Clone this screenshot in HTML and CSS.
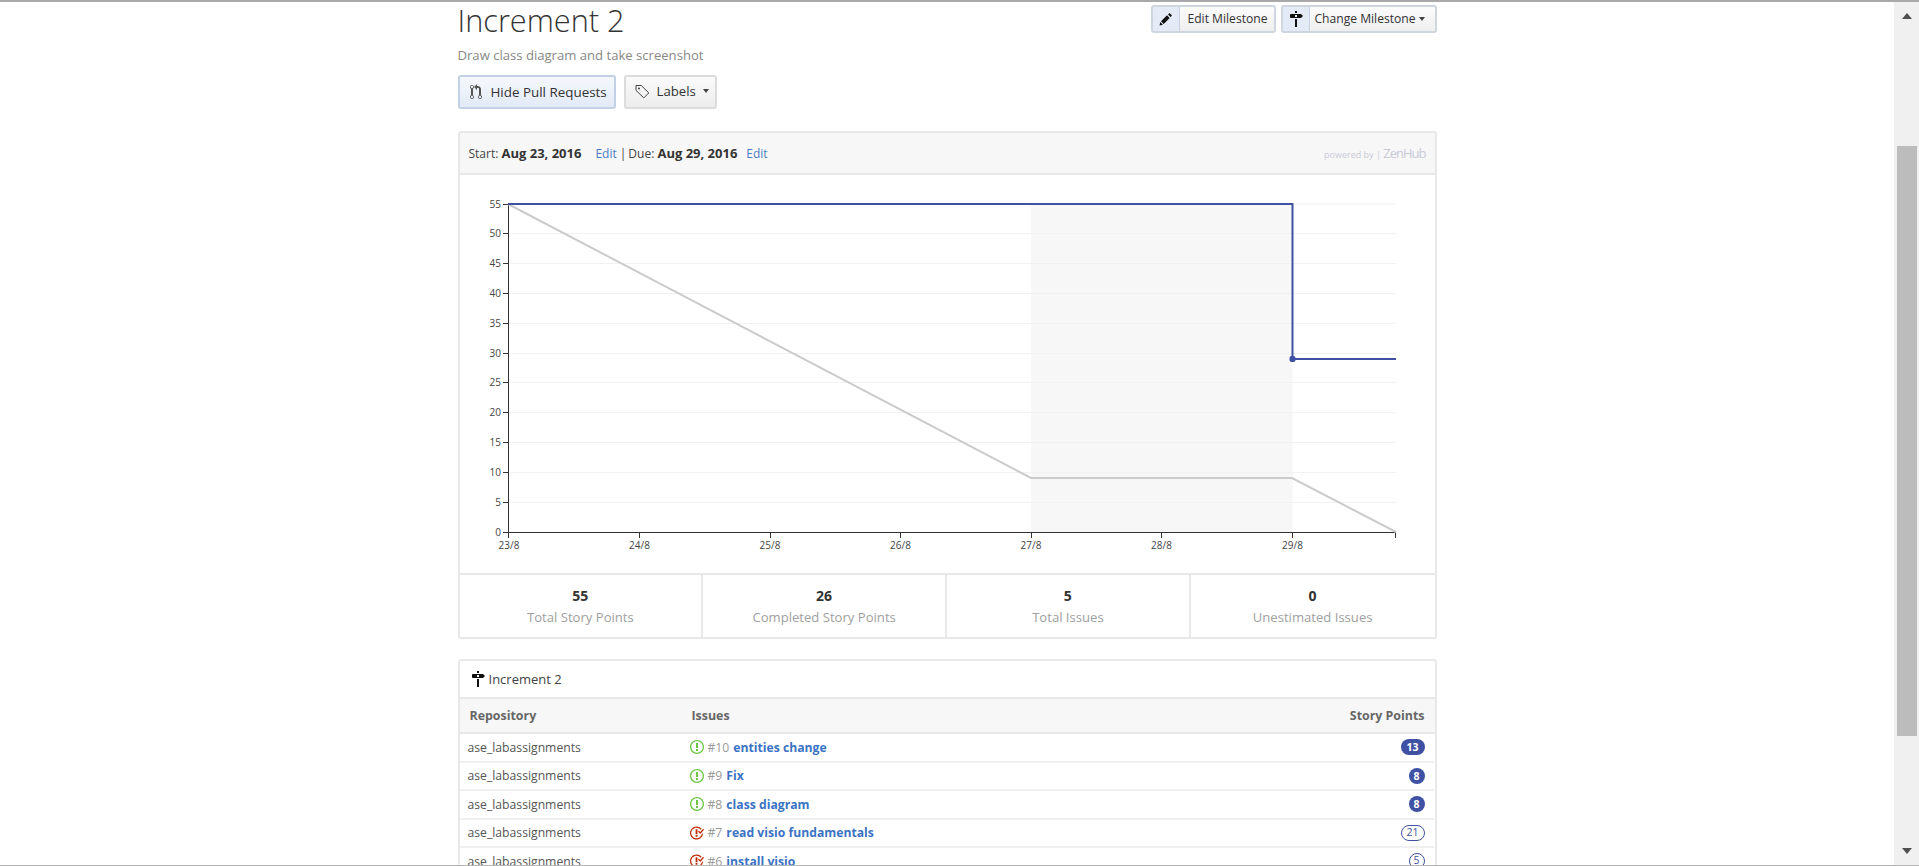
FILE: index.html
```html
<!DOCTYPE html>
<html lang="en">
<head>
  <meta charset="UTF-8" />
  <title>Increment 2</title>
  <link rel="stylesheet" href="styles.css">
</head>
<body>

<div class="window">
  <div class="content">
    <main class="milestone">

      <div class="top">
        <div class="heading">
          <h1>Increment 2</h1>
          <p class="desc">Draw class diagram and take screenshot</p>
          <div class="filters">
            <button class="btn btn-active">
              <svg class="icon" width="12" height="16" viewBox="0 0 12 16"><path d="M11 11.28V5c-.03-.78-.34-1.47-.94-2.06C9.46 2.35 8.78 2.03 8 2H7V0L4 3l3 3V4h1c.27.02.48.11.69.31.21.2.3.42.31.69v6.28A1.993 1.993 0 0 0 10 15a1.993 1.993 0 0 0 1-3.72zm-1 2.92c-.66 0-1.2-.55-1.2-1.2 0-.65.55-1.2 1.2-1.2.65 0 1.2.55 1.2 1.2 0 .65-.55 1.2-1.2 1.2zM4 3c0-1.11-.89-2-2-2a1.993 1.993 0 0 0-1 3.72v6.56A1.993 1.993 0 0 0 2 15a1.993 1.993 0 0 0 1-3.72V4.72c.59-.34 1-.98 1-1.72zm-.8 10c0 .66-.55 1.2-1.2 1.2-.65 0-1.2-.55-1.2-1.2 0-.65.55-1.2 1.2-1.2.65 0 1.2.55 1.2 1.2zM2 4.2C1.34 4.2.8 3.65.8 3c0-.65.55-1.2 1.2-1.2.65 0 1.2.55 1.2 1.2 0 .65-.55 1.2-1.2 1.2z"/></svg>
              Hide Pull Requests
            </button>
            <button class="btn btn-labels">
              <svg class="icon" width="15" height="15" viewBox="0 0 15 15"><path d="M1 1.5h5.2l7.6 7.4-5 5L1 6.4z" fill="none" stroke="#444" stroke-width="1"/><circle cx="4" cy="4.5" r="1" fill="#444"/></svg>
              Labels <span class="caret"></span>
            </button>
          </div>
        </div>
        <div class="actions">
          <button class="split split-edit">
            <span class="split-icon">
              <svg width="13" height="13" viewBox="0 0 13 13"><path d="M0.5 12.5l.8-3.4 2.6 2.6zM2 8.3l6-6 2.7 2.7-6 6zM9 1.4l1-1c.3-.3.7-.3 1 0l1.6 1.6c.3.3.3.7 0 1l-1 1z" fill="#111"/></svg>
            </span>
            <span class="split-text">Edit Milestone</span>
          </button>
          <button class="split split-change">
            <span class="split-icon">
              <svg width="14" height="16" viewBox="0 0 14 16"><path d="M8 2H6V0h2v2zm4 5H2c-.55 0-1-.45-1-1V4c0-.55.45-1 1-1h10l2 2-2 2zM8 4H6v2h2V4zM6 16h2V8H6v8z" fill="#111"/></svg>
            </span>
            <span class="split-text">Change Milestone <span class="caret caret-small"></span></span>
          </button>
        </div>
      </div>

      <section class="panel chart-panel">
        <div class="panel-head">
          <span>Start: <b>Aug 23, 2016</b></span>
          <a class="edit edit-first" href="#">Edit</a>
          <span class="pipe">|</span>
          <span>Due: <b>Aug 29, 2016</b></span>
          <a class="edit edit-second" href="#">Edit</a>
          <span class="powered">powered by | <span class="zenhub">ZenHub</span></span>
        </div>

        <svg class="chart" width="975" height="398" viewBox="460 175 975 398">
          <rect x="1031" y="204" width="261.5" height="328" fill="#f7f7f7"/>

          <g class="grid">
            <line x1="508" x2="1396" y1="204" y2="204"/>
            <line x1="508" x2="1396" y1="233.5" y2="233.5"/>
            <line x1="508" x2="1396" y1="263.5" y2="263.5"/>
            <line x1="508" x2="1396" y1="293.5" y2="293.5"/>
            <line x1="508" x2="1396" y1="323.5" y2="323.5"/>
            <line x1="508" x2="1396" y1="353.5" y2="353.5"/>
            <line x1="508" x2="1396" y1="382.5" y2="382.5"/>
            <line x1="508" x2="1396" y1="412.5" y2="412.5"/>
            <line x1="508" x2="1396" y1="442.5" y2="442.5"/>
            <line x1="508" x2="1396" y1="472.5" y2="472.5"/>
            <line x1="508" x2="1396" y1="502.5" y2="502.5"/>
          </g>

          <g class="ticks">
            <path d="M503 204.5h5M503 233.5h5M503 263.5h5M503 293.5h5M503 323.5h5M503 353.5h5M503 382.5h5M503 412.5h5M503 442.5h5M503 472.5h5M503 502.5h5M503 532.5h5"/>
            <path d="M508.5 532v6M639.5 532v6M770.5 532v6M900.5 532v6M1031.5 532v6M1161.5 532v6M1292.5 532v6M1395.5 532v6"/>
            <path d="M508.5 204v328.5H1396"/>
          </g>

          <g class="y-labels">
            <text x="501" y="207.5">55</text>
            <text x="501" y="237">50</text>
            <text x="501" y="267">45</text>
            <text x="501" y="297">40</text>
            <text x="501" y="327">35</text>
            <text x="501" y="357">30</text>
            <text x="501" y="386">25</text>
            <text x="501" y="416">20</text>
            <text x="501" y="446">15</text>
            <text x="501" y="476">10</text>
            <text x="501" y="506">5</text>
            <text x="501" y="536">0</text>
          </g>
          <g class="x-labels">
            <text x="509" y="549">23/8</text>
            <text x="639.5" y="549">24/8</text>
            <text x="770" y="549">25/8</text>
            <text x="900.5" y="549">26/8</text>
            <text x="1031" y="549">27/8</text>
            <text x="1161.5" y="549">28/8</text>
            <text x="1292.5" y="549">29/8</text>
          </g>

          <polyline class="ideal" points="508,204 1031,478 1292,478 1396,532"/>
          <polyline class="actual" points="508,204 1292.5,204 1292.5,359 1396,359"/>
          <rect x="1289.5" y="356" width="6" height="6" rx="2" fill="#3f51a3"/>
        </svg>

        <div class="stats">
          <div class="stat"><strong>55</strong><span>Total Story Points</span></div>
          <div class="stat"><strong>26</strong><span>Completed Story Points</span></div>
          <div class="stat"><strong>5</strong><span>Total Issues</span></div>
          <div class="stat"><strong>0</strong><span>Unestimated Issues</span></div>
        </div>
      </section>

      <section class="panel issues-panel">
        <div class="issues-title">
          <svg width="14" height="16" viewBox="0 0 14 16"><path d="M8 2H6V0h2v2zm4 5H2c-.55 0-1-.45-1-1V4c0-.55.45-1 1-1h10l2 2-2 2zM8 4H6v2h2V4zM6 16h2V8H6v8z" fill="#111"/></svg>
          Increment 2
        </div>
        <div class="row row-head">
          <span class="col-repo">Repository</span>
          <span class="col-issue">Issues</span>
          <span class="col-points">Story Points</span>
        </div>

        <div class="row">
          <span class="col-repo">ase_labassignments</span>
          <span class="col-issue">
            <svg class="issue-open" width="14" height="16" viewBox="0 0 14 16"><path d="M7 2.3c3.14 0 5.7 2.56 5.7 5.7s-2.56 5.7-5.7 5.7A5.71 5.71 0 0 1 1.3 8c0-3.14 2.56-5.7 5.7-5.7zM7 1C3.14 1 0 4.14 0 8s3.14 7 7 7 7-3.14 7-7-3.14-7-7-7zm1 3H6v5h2V4zm0 6H6v2h2v-2z"/></svg>
            <span class="num">#10</span> <a href="#">entities change</a>
          </span>
          <span class="col-points"><span class="badge badge-wide">13</span></span>
        </div>
        <div class="row">
          <span class="col-repo">ase_labassignments</span>
          <span class="col-issue">
            <svg class="issue-open" width="14" height="16" viewBox="0 0 14 16"><path d="M7 2.3c3.14 0 5.7 2.56 5.7 5.7s-2.56 5.7-5.7 5.7A5.71 5.71 0 0 1 1.3 8c0-3.14 2.56-5.7 5.7-5.7zM7 1C3.14 1 0 4.14 0 8s3.14 7 7 7 7-3.14 7-7-3.14-7-7-7zm1 3H6v5h2V4zm0 6H6v2h2v-2z"/></svg>
            <span class="num">#9</span> <a href="#">Fix</a>
          </span>
          <span class="col-points"><span class="badge">8</span></span>
        </div>
        <div class="row">
          <span class="col-repo">ase_labassignments</span>
          <span class="col-issue">
            <svg class="issue-open" width="14" height="16" viewBox="0 0 14 16"><path d="M7 2.3c3.14 0 5.7 2.56 5.7 5.7s-2.56 5.7-5.7 5.7A5.71 5.71 0 0 1 1.3 8c0-3.14 2.56-5.7 5.7-5.7zM7 1C3.14 1 0 4.14 0 8s3.14 7 7 7 7-3.14 7-7-3.14-7-7-7zm1 3H6v5h2V4zm0 6H6v2h2v-2z"/></svg>
            <span class="num">#8</span> <a href="#">class diagram</a>
          </span>
          <span class="col-points"><span class="badge">8</span></span>
        </div>
        <div class="row">
          <span class="col-repo">ase_labassignments</span>
          <span class="col-issue">
            <svg class="issue-closed" width="14" height="16" viewBox="1 0 15 16"><path d="M7 10h2v2H7v-2zm2-6H7v5h2V4zm1.5 1.5l-1 1L12 9l4-4.5-1-1L12 7l-1.5-1.5zM8 13.7A5.71 5.71 0 0 1 2.3 8c0-3.14 2.56-5.7 5.7-5.7 1.83 0 3.45.88 4.5 2.2l.92-.92A6.947 6.947 0 0 0 8 1C4.14 1 1 4.14 1 8s3.14 7 7 7 7-3.14 7-7l-1.52 1.52c-.66 2.41-2.86 4.19-5.48 4.19v-.01z"/></svg>
            <span class="num">#7</span> <a href="#">read visio fundamentals</a>
          </span>
          <span class="col-points"><span class="badge badge-outline badge-wide">21</span></span>
        </div>
        <div class="row">
          <span class="col-repo">ase_labassignments</span>
          <span class="col-issue">
            <svg class="issue-closed" width="14" height="16" viewBox="1 0 15 16"><path d="M7 10h2v2H7v-2zm2-6H7v5h2V4zm1.5 1.5l-1 1L12 9l4-4.5-1-1L12 7l-1.5-1.5zM8 13.7A5.71 5.71 0 0 1 2.3 8c0-3.14 2.56-5.7 5.7-5.7 1.83 0 3.45.88 4.5 2.2l.92-.92A6.947 6.947 0 0 0 8 1C4.14 1 1 4.14 1 8s3.14 7 7 7 7-3.14 7-7l-1.52 1.52c-.66 2.41-2.86 4.19-5.48 4.19v-.01z"/></svg>
            <span class="num">#6</span> <a href="#">install visio</a>
          </span>
          <span class="col-points"><span class="badge badge-outline">5</span></span>
        </div>
      </section>

    </main>
  </div>

  <div class="scrollbar">
    <span class="arrow arrow-up"></span>
    <div class="thumb"></div>
    <span class="arrow arrow-down"></span>
  </div>
</div>

</body>
</html>
```

FILE: styles.css
```css
html, body {
  margin: 0;
  padding: 0;
  height: 100%;
  overflow: hidden;
}

body {
  font-family: "Open Sans", "Noto Sans", sans-serif;
  font-size: 12px;
  color: #333;
  background: #fff;
}

.window {
  display: flex;
  height: 100vh;
  box-sizing: border-box;
  border-top: 2px solid #a9a9a9;
  border-bottom: 1px solid #b5b5b5;
}

.content {
  flex: 1;
  overflow: hidden;
}

.milestone {
  width: 979px;
  margin: 0 auto;
}

/* top area */
.top {
  display: flex;
  justify-content: space-between;
  align-items: flex-start;
  height: 129px;
}

h1 {
  margin: -1px 0 0;
  font-size: 30.7px;
  font-weight: 300;
  line-height: 38px;
  color: #333;
}

.desc {
  margin: 7px 0 0;
  font-size: 13.1px;
  line-height: 18px;
  color: #888;
}

.filters {
  display: flex;
  gap: 8px;
  margin-top: 11px;
}

button {
  font-family: inherit;
  color: #333;
  padding: 0;
  cursor: pointer;
}

.btn {
  display: flex;
  align-items: center;
  gap: 9px;
  height: 34px;
  box-sizing: border-box;
  border: 2px solid #dcdcdc;
  border-radius: 3px;
  background: linear-gradient(#fbfbfb, #ececec);
  font-size: 13px;
}

.btn-active {
  width: 158px;
  padding-left: 10px;
  border-color: #c3d1e6;
  background: linear-gradient(#f5f8fd, #e3eaf6);
  font-size: 13.4px;
  font-weight: 500;
}

.btn-active .icon path {
  fill: #555;
}

.btn-labels {
  width: 93px;
  padding-left: 9px;
  padding-bottom: 2px;
  gap: 7px;
  font-size: 13.2px;
  font-weight: 500;
}

.caret {
  display: inline-block;
  border-top: 4px solid #444;
  border-left: 3px solid transparent;
  border-right: 3px solid transparent;
  vertical-align: middle;
}

.actions {
  display: flex;
  gap: 5px;
  margin-top: 3px;
}

.split {
  display: flex;
  height: 28px;
  box-sizing: border-box;
  border: 2px solid #cfd6df;
  border-radius: 3px;
  background: linear-gradient(#fcfcfc, #efefef);
  font-size: 12.1px;
}

.split-edit {
  width: 125px;
}

.split-change {
  width: 156px;
}

.split-icon {
  display: flex;
  align-items: center;
  justify-content: center;
  flex-shrink: 0;
  width: 27px;
  height: 100%;
  box-sizing: border-box;
  background: #e4ebf6;
  border-right: 1px solid #c8d3e2;
}

.split-text {
  display: flex;
  align-items: center;
  gap: 3px;
  line-height: 24px;
  white-space: nowrap;
}

.split-edit .split-text {
  padding-left: 8px;
}

.split-change .split-text {
  padding-left: 5px;
}

/* panels */
.panel {
  border: 2px solid #e8e8e8;
  border-radius: 3px;
  box-sizing: border-box;
}

.panel-head {
  display: flex;
  align-items: center;
  height: 40px;
  padding: 0 9px;
  background: #f7f7f7;
  border-bottom: 2px solid #e8e8e8;
  font-size: 12px;
  color: #444;
  white-space: pre;
}

.panel-head b {
  font-size: 13px;
  color: #333;
}

.edit {
  color: #4a7cc4;
  text-decoration: none;
}

.edit-first {
  margin-left: 14px;
}

.pipe {
  margin: 0 2px 0 3px;
}

.edit-second {
  margin-left: 9px;
}

.powered {
  margin-left: auto;
  font-size: 9px;
  color: #c9cad8;
}

.zenhub {
  font-size: 13px;
  letter-spacing: -1px;
}

.chart {
  display: block;
}

.grid line {
  stroke: #f1f1f1;
  stroke-width: 1;
}

.ticks path {
  fill: none;
  stroke: #333;
  stroke-width: 1;
}

.chart text {
  font-family: "Open Sans", sans-serif;
  font-size: 10px;
  fill: #444;
}

.y-labels text {
  text-anchor: end;
}

.x-labels text {
  text-anchor: middle;
}

.ideal {
  fill: none;
  stroke: #cbcbcb;
  stroke-width: 2;
}

.actual {
  fill: none;
  stroke: #3f51a3;
  stroke-width: 2;
}

.stats {
  display: grid;
  grid-template-columns: repeat(4, 1fr);
  border-top: 2px solid #e8e8e8;
}

.stat {
  display: flex;
  flex-direction: column;
  align-items: center;
  height: 62px;
  padding-top: 11px;
  box-sizing: border-box;
  border-right: 2px solid #e8e8e8;
}

.stat:last-child {
  border-right: 0;
}

.stat strong {
  font-size: 14px;
  line-height: 20px;
  color: #333;
}

.stat span {
  font-size: 13.1px;
  line-height: 22px;
  color: #a0a0a0;
}

/* issues table */
.issues-panel {
  margin-top: 20px;
  border-bottom: 0;
  border-radius: 3px 3px 0 0;
}

.issues-title {
  display: flex;
  align-items: center;
  gap: 4px;
  height: 36px;
  padding-left: 11px;
  font-size: 13px;
  color: #444;
}

.row {
  display: flex;
  align-items: center;
  height: 28.5px;
  box-sizing: border-box;
  border-bottom: 2px solid #f0f0f0;
  padding: 0 9px 0 8px;
  font-size: 12.2px;
  color: #555;
  margin-right: 1px;
}

.row-head {
  height: 37px;
  margin-right: 0;
  background: #f7f7f7;
  border-top: 2px solid #e8e8e8;
  border-bottom: 2px solid #e8e8e8;
  font-size: 12.4px;
  font-weight: 700;
  color: #666;
  padding-left: 10px;
  padding-right: 10px;
}

.col-repo {
  width: 222px;
  flex-shrink: 0;
}

.col-issue {
  flex: 1;
  display: flex;
  align-items: center;
  gap: 4px;
  white-space: pre;
}

.col-points {
  text-align: right;
}

.issue-open path {
  fill: #6cc644;
}

.issue-closed path {
  fill: #bd2c00;
}

.num {
  color: #999;
}

.col-issue a {
  color: #3b73c4;
  font-weight: 700;
  text-decoration: none;
}

.badge {
  display: block;
  width: 16px;
  height: 16px;
  box-sizing: border-box;
  border-radius: 8px;
  background: #3f51a3;
  color: #fff;
  font-size: 10.5px;
  font-weight: 700;
  line-height: 16px;
  text-align: center;
}

.badge-wide {
  width: 24px;
}

.badge-outline {
  background: #fff;
  border: 1.5px solid #3f51a3;
  color: #3f51a3;
  font-weight: 500;
  line-height: 13px;
}

/* window scrollbar */
.scrollbar {
  position: relative;
  width: 25px;
  flex-shrink: 0;
  background: #f0f0f0;
}

.thumb {
  position: absolute;
  top: 144px;
  left: 3px;
  width: 20px;
  height: 590px;
  background: #bcbcbc;
}

.arrow {
  position: absolute;
  left: 8px;
  border-left: 5px solid transparent;
  border-right: 5px solid transparent;
}

.arrow-up {
  top: 11px;
  border-bottom: 6px solid #505050;
}

.arrow-down {
  bottom: 11px;
  border-top: 6px solid #505050;
}
```
